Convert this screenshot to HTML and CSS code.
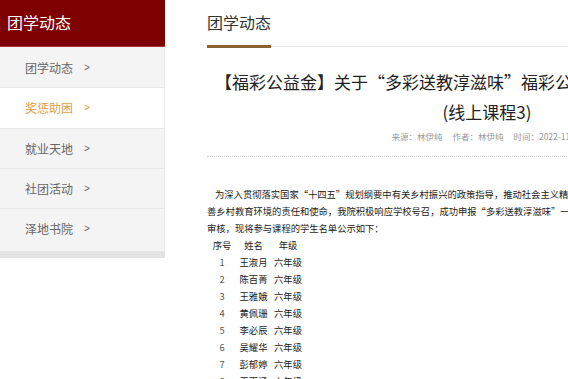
FILE: index.html
```html
<!DOCTYPE html>
<html lang="zh-CN">
<head>
<meta charset="utf-8">
<title>团学动态</title>
<link rel="stylesheet" href="styles.css">
</head>
<body>
<div class="page">
  <aside class="sidebar">
    <div class="side-head">团学动态</div>
    <ul class="side-nav">
      <li class="nav-item"><span>团学动态</span><span class="arrow">&gt;</span></li>
      <li class="nav-item active"><span>奖惩助困</span><span class="arrow">&gt;</span></li>
      <li class="nav-item"><span>就业天地</span><span class="arrow">&gt;</span></li>
      <li class="nav-item"><span>社团活动</span><span class="arrow">&gt;</span></li>
      <li class="nav-item"><span>泽地书院</span><span class="arrow">&gt;</span></li>
    </ul>
    <div class="side-foot"></div>
  </aside>
  <main class="main">
    <div class="main-head"><div class="tab">团学动态</div></div>
    <h1 class="article-title">【福彩公益金】关于“多彩送教淳滋味”福彩公益金项目学生名单的公示<br>(线上课程3)</h1>
    <div class="meta"><span>来源：林伊纯</span><span>作者：林伊纯</span><span>时间：2022-11-22</span></div>
    <div class="article-body">
      <p class="para">为深入贯彻落实国家“十四五”规划纲要中有关乡村振兴的政策指导，推动社会主义精神文明建设，履行高校服务社会、改<br>善乡村教育环境的责任和使命，我院积极响应学校号召，成功申报“多彩送教淳滋味”一福彩公益金项目，经学校<br>审核，现将参与课程的学生名单公示如下：</p>
      <table class="roster">
        <tr><td>序号</td><td>姓名</td><td>年级</td></tr>
        <tr><td class="num">1</td><td>王淑月</td><td>六年级</td></tr>
        <tr><td class="num">2</td><td>陈百菁</td><td>六年级</td></tr>
        <tr><td class="num">3</td><td>王雅娥</td><td>六年级</td></tr>
        <tr><td class="num">4</td><td>黄佩珊</td><td>六年级</td></tr>
        <tr><td class="num">5</td><td>李必辰</td><td>六年级</td></tr>
        <tr><td class="num">6</td><td>吴耀华</td><td>六年级</td></tr>
        <tr><td class="num">7</td><td>彭郁婷</td><td>六年级</td></tr>
        <tr><td class="num">8</td><td>王雨涵</td><td>六年级</td></tr>
      </table>
    </div>
  </main>
</div>
</body>
</html>
```
FILE: styles.css
```css
html, body {
  margin: 0;
  padding: 0;
  background: #fff;
  overflow: hidden;
}
body {
  font-family: "Noto Sans CJK SC", "Noto Sans", sans-serif;
  color: #333;
}
.page {
  display: flex;
  align-items: flex-start;
  width: 1000px;
}
.sidebar {
  width: 165px;
  flex: none;
}
.side-head {
  height: 46px;
  line-height: 44px;
  padding-left: 7px;
  font-size: 16px;
  color: #fff;
  background: #7e0000;
  border-bottom: 1px solid #a83030;
}
.side-nav {
  list-style: none;
  margin: 0;
  padding: 1px 0 3px;
  background: #f4f4f4;
  border-right: 1px solid #ebebeb;
}
.nav-item {
  display: flex;
  align-items: center;
  gap: 11px;
  height: 39.25px;
  padding-left: 25px;
  font-size: 12px;
  color: #666;
  border-bottom: 1px solid #e6e6e6;
}
.nav-item:last-child {
  border-bottom: none;
}
.nav-item.active {
  background: #fff;
  color: #e39d48;
}
.arrow {
  font-size: 10px;
  font-family: "Liberation Sans", sans-serif;
}
.side-foot {
  height: 7px;
  background: #e3e3e3;
}
.main {
  width: 560px;
  flex: none;
  margin-left: 42px;
}
.main-head {
  display: flex;
  border-bottom: 1px solid #e6e6e6;
}
.tab {
  padding: 10px 0 11px;
  line-height: 24px;
  font-size: 16px;
  color: #333;
  border-bottom: 3px solid #8b6332;
  margin-bottom: -2px;
}
.article-title {
  margin: 20px 0 0;
  font-size: 17px;
  font-weight: normal;
  line-height: 30px;
  text-align: center;
  white-space: nowrap;
  color: #222;
}
.meta {
  margin-top: 1px;
  display: flex;
  justify-content: center;
  gap: 10px;
  font-size: 8.5px;
  line-height: 16px;
  color: #999;
  padding-bottom: 12px;
  border-bottom: 1px dotted #cfcfcf;
}
.article-body {
  padding-top: 29px;
  font-size: 9.3px;
  line-height: 17px;
  color: #222;
}
.para {
  margin: 0;
  text-indent: 8px;
  white-space: nowrap;
}
.roster {
  border-collapse: collapse;
  margin: 0;
}
.roster td {
  padding: 0;
  height: 17px;
  line-height: 17px;
  text-align: center;
  white-space: nowrap;
}
.roster td:nth-child(1) { width: 30px; }
.roster td:nth-child(2) { width: 33px; }
.roster td:nth-child(3) { width: 36px; }
.roster .num { color: #555; }
```
